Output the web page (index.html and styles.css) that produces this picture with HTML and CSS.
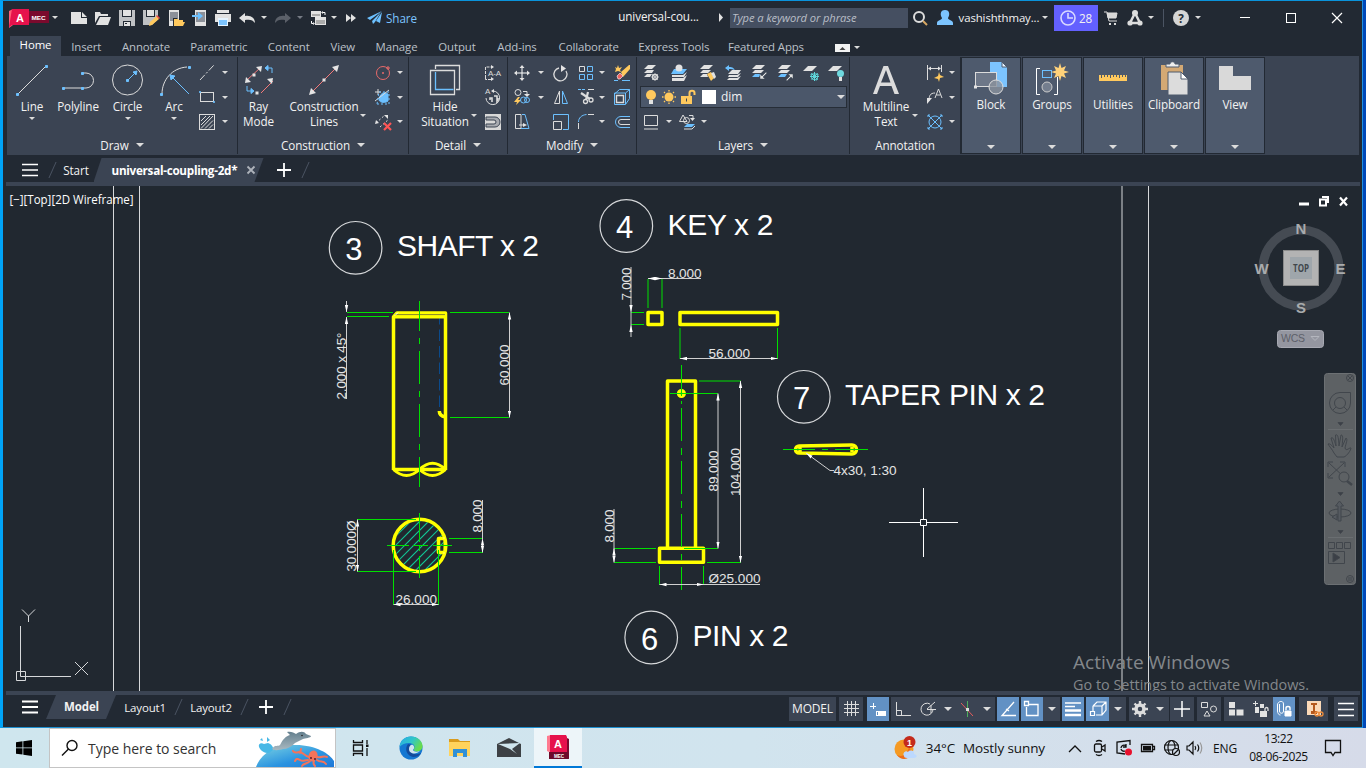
FILE: index.html
```html
<!DOCTYPE html>
<html lang="en">
<head>
<meta charset="utf-8">
<title>universal-coupling-2d</title>
<link rel="stylesheet" href="styles.css">
</head>
<body>
<div class="window">
  <header class="titlebar">
    <span class="logo"><svg width="42" height="20" viewBox="0 0 42 20"><path d="M0 2l4-2v16l-4 3z" fill="#ff5d78"/><path d="M3 0h17v16H3l-3 2z" fill="#e6124c"/><path d="M20 2h20v12H20z" fill="#7b0a2d"/><text x="7" y="13" class="lg">A</text><text x="22.500" y="11" class="mec" textLength="14" lengthAdjust="spacingAndGlyphs">MEC</text></svg></span>
    <b class="caret"></b><i></i>
    <svg width="18" height="16" viewBox="0 0 18 16" class="f"><path d="M1 2h10v6h6v6H1zM12 2l5 5h-5z"/></svg>
    <svg width="18" height="16" viewBox="0 0 18 16" class="f"><path d="M1 2h5l1 2h7v2H5L1 13zM6 7h11l-3 8H2z"/></svg>
    <svg width="18" height="18" viewBox="0 0 18 18" class="f"><path d="M1 1h16v16H1z" fill="#bfc1c4"/><path d="M4 1h10v7H4zM5 12h8v5H5z" fill="#222933"/><path d="M5 1h8v6H5zM6 13h6v4H6z"/><path d="M7 14.500h2" stroke="#222933"/></svg>
    <svg width="18" height="18" viewBox="0 0 18 18" class="f"><path d="M1 1h15v9l-6 6H1z" fill="#bfc1c4"/><path d="M4 1h9v7H4z" fill="#222933"/><path d="M5 1h7v6H5z"/><path d="M8 13l7-6 2 3-7 6-3 1z" fill="#ffc95e"/><path d="M14 7l1-1 3 3-1 1z" fill="#e94b4b"/></svg>
    <svg width="18" height="18" viewBox="0 0 18 18" class="f"><path d="M2 1h10v16H2z"/><path d="M3 3h8v9H3z" fill="#8c9098"/><path d="M6 9h4l1 2h5v6H6z" fill="#222933"/><path d="M7 10h4l1 1h4v2h2l-2 4H7z" fill="#ffc95e"/></svg>
    <svg width="18" height="18" viewBox="0 0 18 18" class="f"><path d="M4 1h11v16H4z"/><path d="M5 3h9v10H5z" fill="#8c9098"/><path d="M1 6h6V3l5 4-5 4V8H1z" fill="#6cc0ff"/></svg>
    <svg width="18" height="18" viewBox="0 0 18 18" class="f"><path d="M3 1h12v3H3zM1 5h16v8H1z"/><path d="M4 9h10v8H4z" fill="#e6f4ff"/><path d="M5 11h8v5H5z" fill="#7cc4ff"/></svg>
    <svg width="18" height="12" viewBox="0 0 18 12" class="f"><path d="M1 6l6-5v3c6-1 10 2 10 7-2-3-5-4-10-3v3z"/></svg>
    <b class="caret"></b>
    <svg width="18" height="12" viewBox="0 0 18 12" fill="#5b6069"><path d="M17 6l-6-5v3C5 3 1 6 1 11c2-3 5-4 10-3v3z"/></svg>
    <b class="caret dim"></b><i></i>
    <svg width="18" height="16" viewBox="0 0 18 16" class="f"><path d="M1 1h10v6H1zM5 7h11v8H5z"/><path d="M2 4h8v2H2zM6 10h9v4H6z" fill="#aaa"/><path d="M12.500 2.500H15V5M3.500 13.500H1.500V11" fill="none" stroke="#fff"/><path d="M13 1v3l-2-1.500zM3 12v3l2-1.500z"/></svg>
    <b class="caret"></b><i></i>
    <svg width="12" height="10" viewBox="0 0 12 10" class="f"><path d="M1 1l5 4-5 4zM6 1l5 4-5 4z"/></svg>
    <svg width="17" height="15" viewBox="0 0 17 15" fill="#6cc0ff"><path d="M16 1L1 8l3 2zM15 2l-9 9 1 3 2-2zM16 2l-6 9 4 2z"/></svg>
    <span class="share">Share</span><i></i>
    <span class="doc">universal-cou...</span><i></i>
    <svg width="6" height="9" viewBox="0 0 6 9" class="f"><path d="M1 0l4 4.500L1 9z"/></svg><i></i>
    <span class="search">Type a keyword or phrase</span><i></i>
    <svg width="18" height="18" viewBox="0 0 18 18" class="s"><circle cx="7" cy="8" r="5" stroke-width="2"/><path d="M11 12l4 4" stroke="#d8a862" stroke-width="2"/></svg>
    <svg width="18" height="18" viewBox="0 0 18 18" fill="#7cc4ff"><path d="M9 1c5 0 5 5 3 8 0 2 5 2 5 5v2H1v-2c0-3 5-3 5-5-2-3-2-8 3-8z"/></svg>
    <span class="user">vashishthmay...</span>
    <b class="caret"></b><i></i>
    <span class="badge"><svg width="16" height="16" viewBox="0 0 16 16" fill="none" stroke="#d9d9ff" stroke-width="1.600"><circle cx="8" cy="8" r="7"/><path d="M8 3v5h5"/></svg><span>28</span></span><i></i>
    <svg width="16" height="16" viewBox="0 0 16 16" class="s"><path d="M1 2h3l2 9h8" /><path d="M4 3h10l-1 5H5z" fill="#d8d8d8"/><path d="M6 14h2M11 14h2" stroke-width="2"/></svg>
    <svg width="18" height="18" viewBox="0 0 18 18" class="s"><path d="M9 4L4 14h10z" stroke-width="2.500"/><g fill="#ddd" stroke="none"><circle cx="9" cy="4" r="3"/><circle cx="4" cy="14" r="2.600"/><circle cx="14" cy="14" r="2.600"/></g></svg>
    <b class="caret"></b><i></i><em class="vline"></em><i></i>
    <span class="help">?</span><i></i>
    <b class="caret"></b><i></i>
    <svg width="12" height="12" viewBox="0 0 12 12" class="s w"><path d="M1 5.500h10"/></svg><i></i>
    <svg width="12" height="12" viewBox="0 0 12 12" class="s w"><rect x="1.500" y="1.500" width="9" height="9"/></svg><i></i>
    <svg width="12" height="12" viewBox="0 0 12 12" class="s w"><path d="M1 1l10 10M11 1L1 11" stroke-width="1.200"/></svg>
  </header>

  <nav class="menu">
    <i></i><span class="on">Home</span><span>Insert</span><span>Annotate</span><span>Parametric</span><span>Content</span><span>View</span><span>Manage</span><span>Output</span><span>Add-ins</span><span>Collaborate</span><span>Express Tools</span><span>Featured Apps</span><i></i><em class="mini"><svg width="15" height="8" viewBox="0 0 15 8"><path d="M4.500 6L7.500 3l3 3z" fill="#444"/></svg></em><b class="caret"></b>
  </nav>

  <section class="ribbon">
    <div class="panel draw">
      <div class="body">
        <div class="big"><svg width="36" height="36" viewBox="0 0 36 36" class="s"><path d="M4 32L32 4"/><path d="M2.500 31.500h2v2h-2zM31.500 3.500h2v2h-2z" class="b"/></svg><span>Line</span><b class="caret"></b></div>
        <div class="big"><svg width="36" height="36" viewBox="0 0 36 36" class="s"><path d="M3 26h20M22 11h4a7 7 0 010 15h-3" /><path d="M2.500 25.500h2v2h-2zM21.500 25.500h2v2h-2zM21.500 10.500h2v2h-2z" class="b"/></svg><span>Polyline</span></div>
        <div class="big"><svg width="36" height="36" viewBox="0 0 36 36" class="s"><circle cx="17.500" cy="18" r="15"/><path d="M18 18l8-8" class="b"/><path d="M16.500 17.500h2v2h-2zM27 9l-1 4-3-3z" class="b"/></svg><span>Circle</span><b class="caret"></b></div>
        <div class="big"><svg width="36" height="36" viewBox="0 0 36 36" class="s"><path d="M5 32C5 18 15 6 30 5"/><path d="M32 32L15 15" class="b"/><path d="M3.500 31.500h2v2h-2zM31.500 4.500h2v2h-2zM13 13l5 1-4 4z" class="b"/></svg><span>Arc</span><b class="caret"></b></div>
        <div class="col">
          <div><svg width="18" height="18" viewBox="0 0 18 18" class="s"><path d="M2 16L16 1" stroke-dasharray="7 2 2 2"/></svg><b class="caret"></b></div>
          <div><svg width="18" height="18" viewBox="0 0 18 18" class="s"><rect x="2.500" y="4.500" width="13" height="9"/><path d="M1.500 3.500h1v1h-1zM15.500 13.500h1v1h-1z" class="b"/></svg><b class="caret"></b></div>
          <div><svg width="18" height="18" viewBox="0 0 18 18" class="s"><rect x="1.500" y="1.500" width="15" height="15"/><path d="M3 8l5-5M3 12l9-9M3 15.500L15 3M7 15.500l8-8M11 15.500l4-4"/></svg><b class="caret"></b></div>
        </div>
      </div>
      <div class="name">Draw<b class="caret lg"></b></div>
    </div>
    <div class="panel cons">
      <div class="body">
        <div class="big"><svg width="36" height="36" viewBox="0 0 36 36" class="s"><path d="M6 18L19 6M20 31l12-12" stroke="#f27979"/><path d="M4 21l1-6 5 5zM21 4l-6 1 5 5zM32 16l-6 1 5 5z" class="g"/><path d="M11.500 11.500h3v3h-3zM14.500 29.500h3v3h-3z" class="g"/><path d="M31 11V6h-6M6 24v5h6" class="b o"/><path d="M24 6l3-2.500v5zM13 29l-3-2.500v5z" class="b"/></svg><span>Ray<br>Mode</span></div>
        <div class="big"><svg width="36" height="36" viewBox="0 0 36 36" class="s"><path d="M6 30L30 6" stroke="#f27979"/><path d="M3 33l2-7 5 5zM33 3l-7 2 5 5zM16.500 16.500h3v3h-3z" class="g"/></svg><span>Construction<br>Lines</span></div>
        <b class="caret side"></b>
        <div class="col">
          <div><svg width="18" height="18" viewBox="0 0 18 18" class="s"><circle cx="9" cy="9" r="6.500" stroke="#e96a6a"/><path d="M8.500 8.500h1v1h-1zM13 3h2v2h-2z" stroke="#e96a6a"/></svg><b class="caret"></b></div>
          <div><svg width="18" height="18" viewBox="0 0 18 18" class="s"><path d="M6 8c3-5 6-3 8-2v7c-2 2-8 2-9-1z" class="b"/><path d="M1 4h6M4 1v6M1 13L15 2"/><path d="M3 16h12V4H5z" class="b o" stroke-dasharray="2 2"/></svg><b class="caret"></b></div>
          <div><svg width="18" height="18" viewBox="0 0 18 18" class="s"><path d="M2 10l9-8M6 14l9-8" stroke-dasharray="2 2"/><path d="M1 11l1-4 3 3zM10 2h4v4z" class="g"/><path d="M10 10l7 7M17 10l-7 7" stroke="#ff5555" stroke-width="2.200"/></svg><b class="caret"></b></div>
        </div>
      </div>
      <div class="name">Construction<b class="caret lg"></b></div>
    </div>
    <div class="panel detail">
      <div class="body">
        <div class="big"><svg width="36" height="36" viewBox="0 0 36 36" class="s"><path d="M8.500 7V3.500h24v24H29M27.500 8.500h-24v24h24z" stroke-width="1.300"/><path d="M8.500 10v17.500h18" class="b o" stroke-width="1.300"/></svg><span>Hide<br>Situation</span></div>
        <b class="caret side"></b>
        <div class="col">
          <div><svg width="18" height="18" viewBox="0 0 18 18" class="s"><path d="M1.500 14V3H7M1.500 14v1.500H7" stroke-dasharray="3 1"/><path d="M7 1l3 2-3 2zM7 13l3 2-3 2z" class="g"/><text x="4" y="12" class="t8">A-A</text></svg></div>
          <div><svg width="18" height="18" viewBox="0 0 18 18" class="s"><path d="M9 3a6.800 6.800 0 11-7 7"/><path d="M6 12v-2h2v4M10 8h3v7M14 10v3" stroke-width="1.600"/><text x="1" y="6" class="t8">A</text><path d="M10 1v4L7 3z" class="g"/></svg></div>
          <div><svg width="18" height="18" viewBox="0 0 18 18"><path d="M1 1h16v16H1z" fill="#d8d8d8"/><path d="M2 4h9a5 5 0 010 10H2v-3h8a2 2 0 000-4H2z" fill="#a7aab0" stroke="#3b4453"/></svg></div>
        </div>
      </div>
      <div class="name">Detail<b class="caret lg"></b></div>
    </div>
    <div class="panel modify">
      <div class="body rows">
        <div class="row"><svg width="18" height="18" viewBox="0 0 18 18" class="s w"><path d="M9 3v12M3 9h12"/><path d="M9 1l2.500 3h-5zM9 17l2.500-3h-5zM1 9l3-2.500v5zM17 9l-3-2.500v5z" class="g"/></svg><b class="caret"></b><svg width="18" height="18" viewBox="0 0 18 18" class="s"><path d="M7 4a6.500 6.500 0 107 3" stroke-width="1.300"/><path d="M9 1l5 3.500L9 8z" class="g sm"/></svg><svg width="18" height="18" viewBox="0 0 18 18" class="s b o"><path d="M2.500 2.500h5v5h-5z" stroke="#ddd"/><path d="M10.500 2.500h5v5h-5zM10.500 10.500h5v5h-5zM2.500 10.500h5v5h-5z"/></svg><b class="caret"></b><svg width="18" height="18" viewBox="0 0 18 18" class="s"><path d="M8 8l8-7h1v4l-7 8z" fill="#ffc95e" stroke="none"/><path d="M7 9l3 3-3 3H5l-1-3z" fill="#f0635f" stroke="#fff" stroke-width=".6"/><path d="M5 1l1 3 3-1-2 3 1 2-3-1-3 1 1-3-1-2 2 1z" fill="#ffc95e" stroke="none"/><path d="M1 16.500h4M9 16.500h8" class="b"/></svg></div>
        <div class="row"><svg width="18" height="18" viewBox="0 0 18 18" class="s"><circle cx="5" cy="4.500" r="3"/><path d="M10 3.500h4v3"/><path d="M11 6h6l-3 3z" class="g"/><path d="M5 9L1 14h3l-1 3 5-5H5l2-3z" fill="#ffc95e" stroke="none"/><g class="b o"><circle cx="10.500" cy="12" r="3"/><circle cx="14" cy="12" r="2.500"/></g></svg><b class="caret"></b><svg width="18" height="18" viewBox="0 0 18 18" class="s"><path d="M7.500 3v12.500h-5z"/><path d="M10.500 3v12.500h5z" class="b o"/></svg><svg width="18" height="18" viewBox="0 0 18 18" class="s"><path d="M4 5l9 6M11 4l-2 8" stroke-width="2.200"/><circle cx="8.500" cy="13.500" r="2" stroke-width="1.300"/><circle cx="14" cy="12" r="2" stroke-width="1.300"/><path d="M1 1.500h8" class="b" stroke-dasharray="3 1"/><path d="M11 1.500h6"/></svg><b class="caret"></b><svg width="18" height="18" viewBox="0 0 18 18" class="s"><path d="M3.500 7.500h7v7h-7z" stroke-width="1.400"/><path d="M1.500 6l5-4.500h10v9l-4 6h-11zV5h11V16M12.500 5l4-3.500" class="b o"/></svg></div>
        <div class="row"><svg width="18" height="18" viewBox="0 0 18 18" class="s"><path d="M8 1.500H2.500v14H8z" /><path d="M9 1.500h3l4 14H8" class="b o"/><path d="M6 12h5"/><path d="M10 10l4 2-4 2z" class="g"/></svg><i></i><svg width="18" height="18" viewBox="0 0 18 18" class="s"><path d="M1.500 8.500h8v8h-8z"/><path d="M1.500 7V1.500h15v15H11" class="b o"/></svg><svg width="18" height="18" viewBox="0 0 18 18" class="s"><path d="M1.500 16v-6M11 1.500h6"/><path d="M1.500 9c0-4 3-7 8-7.500" class="b o"/></svg><b class="caret"></b><svg width="18" height="18" viewBox="0 0 18 18" class="s"><path d="M17 3.500H8a5 5 0 000 11h9" class="b o"/><path d="M17 6.500H8a2.500 2.500 0 000 5h9"/></svg></div>
      </div>
      <div class="name">Modify<b class="caret lg"></b></div>
    </div>
    <div class="panel layers">
      <div class="body rows">
        <div class="row top">
          <svg width="18" height="18" viewBox="0 0 18 18" class="f"><path d="M6 1h8l-4 4H2zM5 6h7l-2 3H2zM5 10h5l-2 3H2z"/><circle cx="13" cy="13" r="2.500" fill="none" stroke="#ddd" stroke-width="1.400"/><path d="M13 9v8M9 13h8M10 10l6 6M16 10l-6 6" stroke="#ddd" stroke-width=".6"/></svg>
          <svg width="18" height="18" viewBox="0 0 18 18" class="f"><path d="M4 5h13l-4 5H1z" fill="#6cc0ff"/><circle cx="9" cy="4" r="3.500"/><path d="M2 11h11l4-3-3 5H2zM2 14h11l4-3-3 6H2z"/></svg>
          <svg width="18" height="18" viewBox="0 0 18 18" class="f"><path d="M6 1h9l-4 4H2zM5 6h8l-3 3H2zM5 10h4l1 3H2z"/><path d="M9 10l4-2 3 6-3 3z" fill="#ffc95e"/><path d="M13 9l3-1 2 5-2 2z"/></svg>
          <svg width="18" height="18" viewBox="0 0 18 18" class="f"><path d="M1 4l4-3v2c4 0 5 1 6 4-2-2-3-2-6-2v2z" fill="#6cc0ff"/><path d="M8 6h9l-3 4H4zM5 11h8l4-2-3 4H4zM5 14h8l4-2-3 4H3z"/></svg>
          <svg width="18" height="18" viewBox="0 0 18 18" class="f"><path d="M6 1h9l-4 4H2zM5 6h9l-3 3H2z"/><path d="M5 10h6l-2 3H2z" fill="#6cc0ff"/><path d="M17 9l-4 4 2 2h-5v-5l2 2 4-4z" stroke="#3b4453" stroke-width=".5"/></svg>
          <svg width="18" height="18" viewBox="0 0 18 18" class="f"><path d="M6 1h9l-4 4H2zM5 6h9l-3 3H2z"/><path d="M5 10h6l-2 3H2z" fill="#6cc0ff"/><path d="M10 16l4-4-2-2h5v5l-2-2-4 4z" stroke="#3b4453" stroke-width=".5"/></svg>
          <svg width="18" height="18" viewBox="0 0 18 18" class="f"><path d="M6 2h9l-5 5H1z"/><path d="M12.500 8v9M8 12.500h9M9.500 9.500l6 6M15.500 9.500l-6 6M9 10l1 5 5 1 1-6z" fill="none" stroke="#5fd7dc"/></svg>
          <svg width="18" height="18" viewBox="0 0 18 18" class="f"><path d="M6 2h9l-5 5H1z"/><circle cx="13.500" cy="9.500" r="3.500" fill="#6fd9df"/><path d="M12 13h3v4h-3z"/></svg>
        </div>
        <div class="select">
          <svg width="14" height="16" viewBox="0 0 14 16" class="f"><circle cx="7" cy="6" r="5" fill="#ffc95e"/><path d="M5 11h4v4H5z"/></svg>
          <svg width="16" height="16" viewBox="0 0 16 16"><circle cx="8" cy="8" r="4.500" fill="#ffc95e"/><path d="M8 1v1.500M8 13.500V15M1 8h1.500M13.500 8H15M3 3l1 1M12 12l1 1M13 3l-1 1M3 13l1-1" stroke="#ffc95e" stroke-width="1.300"/></svg>
          <svg width="16" height="16" viewBox="0 0 16 16"><path d="M1 7h11v8H1z" fill="#ffc95e"/><path d="M9.500 7V4c0-3 5-3 5 0v2" fill="none" stroke="#ffc95e" stroke-width="2"/><path d="M6.500 9.500v3" stroke="#3b4453"/></svg>
          <em class="swatch"></em><span>dim</span><b class="caret lg"></b>
        </div>
        <div class="row low"><svg width="18" height="18" viewBox="0 0 18 18" class="s"><path d="M2.500 2.500h13v10h-13zM2 16h14"/></svg><b class="caret"></b><svg width="18" height="18" viewBox="0 0 18 18" class="s"><path d="M5 2L1.500 8.500H9z"/><circle cx="8.500" cy="7.500" r="3"/><path d="M11 2.500h4v3"/><path d="M12 5h5l-2.500 3z" class="g sm"/><path d="M9 11h8l-3 3H6z" class="b sm"/><path d="M6 16h8l3-3"/></svg><b class="caret"></b></div>
      </div>
      <div class="name">Layers<b class="caret lg"></b></div>
    </div>
    <div class="panel anno">
      <div class="body">
        <div class="big"><svg width="36" height="36" viewBox="0 0 36 36"><path d="M5 32L15.500 4h4.500l11 28h-4.500l-3-8H12l-3 8zM13 20.500h9.500L18 8z" fill="#dcdcdc" fill-rule="evenodd"/></svg><span>Multiline<br>Text</span></div>
        <b class="caret side"></b>
        <div class="col">
          <div><svg width="18" height="18" viewBox="0 0 18 18" class="s"><path d="M1.500 1v15M15.500 1v7M3 4.500h11"/><path d="M2 4.500l3-2v4zM15 4.500l-3-2v4z" class="g sm"/><path d="M13 8l1 3 4 2-4 1-1 4-1-3-4-1 4-2z" fill="#ffc95e" stroke="none"/></svg><b class="caret"></b></div>
          <div><svg width="18" height="18" viewBox="0 0 18 18" class="s"><path d="M3 13c0-5 1-8 6-8"/><path d="M1 10h5l-5 6z" class="g sm"/><path d="M9 10l3.500-9L16 10M10.500 7h4"/></svg><b class="caret"></b></div>
          <div><svg width="18" height="18" viewBox="0 0 18 18" class="s b o"><circle cx="9" cy="9" r="6"/><path d="M2 2l14 14M16 2L2 16M2 4V2h2M14 2h2v2M16 14v2h-2M4 16H2v-2"/></svg><b class="caret"></b></div>
        </div>
      </div>
      <div class="name">Annotation</div>
    </div>
    <div class="tiles">
      <div class="tile"><svg width="36" height="36" viewBox="0 0 36 36" class="s"><path d="M17 1h12l5 5v20H17z" fill="#7cc4ff" stroke="none"/><path d="M29 1v5h5z" fill="#e8f4ff" stroke="#4e5a6d"/><rect x="2.500" y="11.500" width="21" height="14" fill="#6d7788"/><path d="M1 24.500h3v3H1z" class="g sm"/><circle cx="23" cy="26" r="7" fill="#8b929e" fill-opacity=".8"/></svg><span>Block</span><b class="caret lg"></b></div>
      <div class="tile"><svg width="36" height="36" viewBox="0 0 36 36" class="s w"><path d="M6 7.500H2.500v26H6M20 33.500h3.500V16"/><rect x="8.500" y="9.500" width="9" height="7" class="b o"/><circle cx="13" cy="26" r="5" fill="#747e8e" stroke="#ccc"/><path d="M26 2l1.500 5 4.500-2-2 4.500 5 1.500-5 1.500 2 4.500-4.500-2L26 20l-1.500-5-4.500 2 2-4.500-5-1.500 5-1.500L20 5l4.500 2z" fill="#ffd27a" stroke="none"/></svg><span>Groups</span><b class="caret lg"></b></div>
      <div class="tile"><svg width="36" height="36" viewBox="0 0 36 36"><path d="M4 14h28v6H4z" fill="#ffc95e"/><path d="M6.500 14v3M9.500 14v2M12.500 14v2M15.500 14v3M18.500 14v2M21.500 14v2M24.500 14v3M27.500 14v2M30.500 14v2" stroke="#4e5a6d"/></svg><span>Utilities</span><b class="caret lg"></b></div>
      <div class="tile"><svg width="36" height="36" viewBox="0 0 36 36"><path d="M5 4h22v25H5z" fill="#d4a974"/><path d="M10 6V3h4c0-3 5-3 5 0h4v3z" fill="#eee" stroke="#4e5a6d"/><path d="M12 11h13l7 7v16H12z" fill="#dcdcdc" stroke="#4e5a6d"/><path d="M25 11v7h7z" fill="#fff" stroke="#4e5a6d"/></svg><span>Clipboard</span><b class="caret lg"></b></div>
      <div class="tile"><svg width="36" height="36" viewBox="0 0 36 36"><path d="M2 5h14v10h18v14H2z" fill="#d9d9d9"/></svg><span>View</span><b class="caret lg"></b></div>
    </div>
  </section>

  <div class="doctabs">
    <i></i><svg width="16" height="14" viewBox="0 0 16 14" class="s w"><path d="M0 1.500h16M0 7h16M0 12.500h16" stroke-width="1.600"/></svg><u></u><span>Start</span><span class="active">universal-coupling-2d*<svg width="10" height="10" viewBox="0 0 10 10" stroke="#aeb3bb" stroke-width="1.800"><path d="M1.500 1.500l7 7M8.500 1.500l-7 7"/></svg></span><i></i><svg width="14" height="14" viewBox="0 0 14 14" class="s w"><path d="M7 0v14M0 7h14" stroke-width="1.800"/></svg><u></u>
  </div>
  <div class="strip"></div>

  <main class="canvas">
  <svg width="1359" height="505" viewBox="3 186 1359 505">
    <defs>
      <marker id="ar" markerWidth="7" markerHeight="4" refX="7" refY="2" orient="auto-start-reverse" markerUnits="userSpaceOnUse"><path d="M0 .3L7 2 0 3.700z" fill="#fff"/></marker>
      <clipPath id="disc"><circle cx="419.500" cy="545.500" r="24.500"/></clipPath>
    </defs>
    <g class="thin"><path d="M113.500 186v505M139.500 186v505M1122 186v505M1148.500 186v505"/></g>
    <text x="9.500" y="204" class="ui" textLength="124" lengthAdjust="spacingAndGlyphs">[−][Top][2D Wireframe]</text>
    <g class="thin"><path d="M20.500 626v50.500H71M16.500 671.500h9v9h-9zM22 609.500l6.500 6.500 6.500-6.500M28.500 616v6M75 662l13 13M88 662l-13 13"/></g>

    <g class="ring"><circle cx="355.600" cy="247.800" r="26.300"/><circle cx="626.300" cy="226" r="26.300"/><circle cx="803.800" cy="396.800" r="26.300"/><circle cx="651.200" cy="637.500" r="26.300"/></g>
    <g class="ttl">
      <text x="345.200" y="260" class="num">3</text><text x="397" y="256" textLength="142">SHAFT x 2</text>
      <text x="616" y="238" class="num">4</text><text x="667.500" y="235" textLength="106">KEY x 2</text>
      <text x="793" y="409" class="num">7</text><text x="845" y="405" textLength="200">TAPER PIN x 2</text>
      <text x="641" y="650" class="num">6</text><text x="692.500" y="646" textLength="96">PIN x 2</text>
    </g>

    <g class="hatch" clip-path="url(#disc)"><path d="M380 552l50-50M380 561l60-60M380 570l70-70M380 579l70-70M385 583l70-70M394 583l70-70M403 583l60-60M412 583l60-60M421 583l60-60"/></g>
    <path d="M439.500 313v99" stroke="#0b4a8a" stroke-dasharray="11.500 5"/>
    <g class="yel">
      <path d="M393.500 470V317l3.500-4h48.500v157M394 316.800h51.500M393.500 469.500h52M439.300 411q0 5 6 6"/>
      <path d="M393.500 469.500q13 12 26 0q13-12.500 26 0M419.500 469.500q13 12 26 0" stroke-width="3"/>
      <circle cx="419.500" cy="545.500" r="26.300"/><path d="M444.500 538.500h-6v14h6"/><path d="M444.500 539v13" stroke-width="2"/>
      <rect x="648" y="312.400" width="14" height="12"/><rect x="680" y="312.400" width="97.500" height="12"/>
      <path d="M667.500 548V381h28v167"/><rect x="659.500" y="548.300" width="44" height="14"/><circle cx="681.400" cy="393.500" r="2.800"/>
      <path d="M799 446l53-1a4.500 4.500 0 010 9l-53-1a3.500 3.500 0 010-7zM800 447v5M852 447v5"/>
    </g>
    <path d="M395 314.600h50" stroke="#8a8a2a"/>
    <path d="M398 312.500l-3 3M443.500 538h1M443.500 553h1" stroke="#fff"/>
    <g class="grn">
      <path d="M419.500 301v30M419.500 338v6M419.500 351v33M419.500 391v6M419.500 404v33M419.500 444v6M419.500 457v30M419.500 513v29M419.500 545v6M419.500 556v22M387 545.500h22M413 545.500h15M433 545.500h19"/>
      <path d="M347 312.500h46M347 316.500h42M450 312.500h59M450 417.500h59M357 519.500h59M357 571.500h59M393.500 550v55M438.500 550v55M449 538.500h34M449 552.500h34"/>
      <path d="M631 312.500h13M631 324.500h13M648 279v29M662 279v29M680 328v31M777.500 328v31"/>
      <path d="M681.500 365v31M681.500 401v3M681.500 408v33M681.500 448v7M681.500 461v33M681.500 501v7M681.500 514v33M681.500 554v6M681.500 567v23M670 393.500h48M699 381h42M614 548.500h42M684 548.500h34M614 562.500h42M707 562.500h34M659.500 566v19M703.500 566v19"/>
      <path d="M783 449.500h32M822 449.500h6M835 449.500h33"/>
    </g>
    <g class="dimline">
      <path d="M346.500 301v11" marker-end="url(#ar)"/><path d="M346.500 399v-82" marker-end="url(#ar)"/>
      <path d="M509.500 312.500v105" class="two"/><path d="M357.500 519.500v52" class="two"/><path d="M393.500 604.500h45" class="two"/><path d="M482.500 538.500v14" class="two"/><path d="M482.500 500v40"/>
      <path d="M631 267v45" marker-end="url(#ar)"/><path d="M631 337v-12" marker-end="url(#ar)"/><path d="M648 278.500h14" class="two"/><path d="M662 278.500h39M631 312v13"/><path d="M680 358.500h97.500" class="two"/>
      <path d="M718 393.500v155" class="two"/><path d="M740.500 381v181.500" class="two"/><path d="M614 548.500v14" class="two"/><path d="M614 509v42"/><path d="M659.500 584.500h44" class="two"/><path d="M703 584.500h57"/>
      <path d="M834 470.500h-4L806 453" marker-end="url(#ar)"/>
    </g>
    <g class="dims">
      <text transform="translate(346 399.500) rotate(-90)" textLength="67">2.000 x 45°</text>
      <text transform="translate(508.500 385.500) rotate(-90)" textLength="41">60.000</text>
      <text transform="translate(356.300 571.500) rotate(-90)" textLength="51">30.000Ø</text>
      <text transform="translate(482 532.500) rotate(-90)" textLength="33">8.000</text>
      <text x="395.500" y="604" textLength="41.500">26.000</text>
      <text transform="translate(630.500 300.500) rotate(-90)" textLength="33">7.000</text>
      <text x="668" y="278" textLength="33.500">8.000</text>
      <text x="708.500" y="358" textLength="41.500">56.000</text>
      <text transform="translate(717.500 491.500) rotate(-90)" textLength="41">89.000</text>
      <text transform="translate(740 496) rotate(-90)" textLength="48">104.000</text>
      <text transform="translate(613.500 542.500) rotate(-90)" textLength="33">8.000</text>
      <text x="708.500" y="583" textLength="52">Ø25.000</text>
      <text x="833.500" y="475" textLength="63">4x30, 1:30</text>
    </g>
    <path d="M889 522.500h31M927 522.500h31M923.500 488v31M923.500 526v31M920.500 519.500h6v6h-6z" class="cross"/>

    <path d="M1299 204h10" stroke="#fff" stroke-width="3"/><path d="M1320 199.500h6v6h-6zM1322 197h6v6" fill="none" stroke="#fff" stroke-width="2"/><path d="M1340 197.500l7 8M1347 197.500l-7 8" stroke="#fff" stroke-width="2.200"/>
    <circle cx="1301" cy="268" r="38" fill="none" stroke="#454b53" stroke-width="9"/>
    <g class="nsew"><text x="1301" y="234">N</text><text x="1301" y="313">S</text><text x="1261.500" y="273.500">W</text><text x="1340.500" y="273.500">E</text></g>
    <rect x="1283.500" y="250.500" width="35" height="35" fill="#b3b3b3" stroke="#8b8b8b"/><rect x="1290" y="257" width="22" height="22" fill="#9fa6ab"/><text x="1293" y="272" class="top" textLength="16" lengthAdjust="spacingAndGlyphs">TOP</text>
    <rect x="1277.500" y="330.500" width="46" height="17" rx="3" fill="#9496a0" stroke="#a7a9b2"/><text x="1281" y="342" class="wcs" textLength="24">WCS</text><path d="M1311 336.500h8l-4 4z" fill="none" stroke="#b4b6be"/>
    <rect x="1324.500" y="373.500" width="31" height="211" rx="3" fill="#5d6164" stroke="#6c7073"/>
    <g class="navi">
      <circle cx="1350" cy="378" r="3.500"/><path d="M1348 376l4 4M1352 376l-4 4"/>
      <path d="M1340 392.500h10.500v10.500a10.500 10.500 0 11-10.500-10.500z"/><circle cx="1340" cy="403" r="5.500"/><path d="M1333 410l3-3M1347 410l-3-3"/>
      <path d="M1338 422.500h5l-2.500 3zM1338 492.500h5l-2.500 3zM1338 530.500h5l-2.500 3z" fill="#3c4047"/>
      <path d="M1328 429.500h25M1328 537.500h25" stroke="#6a6e71"/>
      <path d="M1334 453c-2-4-5-7-6-9 2-1 4 2 6 4l-3-10c2-1 3 1 5 8l-.5-11c2-1 3 1 3.500 11l2-11c2 0 2 2 1 12l4-9c2 1 0 5-1 10 1 4 5-1 6 0 0 2-4 8-7 9h-7z"/>
      <path d="M1329 463l16 15M1344 463l-15 14M1328 467v-5h5M1340 462h5v5M1328 473v5h5"/><circle cx="1344" cy="477" r="5" fill="#5d6164"/><path d="M1347 481l5 4" stroke-width="2.500"/>
      <ellipse cx="1340" cy="513" rx="11" ry="4"/><path d="M1338 521v-15h-2.500l4-5 4 5h-2.500v15zM1332 517l5-3v6z" fill="#565b61"/>
      <path d="M1328.500 542.500h6v6h-6zM1336.500 542.500h6v6h-6zM1344.500 542.500h6v6h-6zM1328.500 551.500h16v12h-16z"/><path d="M1333 553l7 4.500-7 4.500z" fill="#3c4047"/>
      <circle cx="1350" cy="579" r="3.500"/><path d="M1348 578h4M1348 580h4"/>
    </g>
    <text x="1073" y="669" class="act big1" textLength="157" lengthAdjust="spacingAndGlyphs">Activate Windows</text>
    <text x="1073" y="689.500" class="act" textLength="236" lengthAdjust="spacingAndGlyphs">Go to Settings to activate Windows.</text>
  </svg>
  </main>
  <div class="strip"></div>

  <footer class="status">
    <div class="layouts"><svg width="16" height="14" viewBox="0 0 16 14" class="s w"><path d="M0 1.500h16M0 7h16M0 12.500h16" stroke-width="1.800"/></svg><span class="model">Model</span><span>Layout1</span><u></u><span>Layout2</span><u></u><svg width="14" height="14" viewBox="0 0 14 14" class="s w"><path d="M7 0v14M0 7h14" stroke-width="1.800"/></svg><u></u></div>
    <div class="tools">
      <span class="btn m">MODEL</span><i></i>
      <span class="btn"><svg width="18" height="18" viewBox="0 0 18 18" class="s"><path d="M5.500 1v15M9.500 1v15M13.500 1v15M2 4.500h15M2 8.500h15M2 12.500h15"/></svg></span><i></i>
      <span class="btn hot"><svg width="18" height="18" viewBox="0 0 18 18" class="s w"><path d="M1 6.500h6M4.500 3v6"/><path d="M7 11h10v5H7z" fill="#fff" stroke="none"/><path d="M8 12h1v3H8z" fill="#6291c4" stroke="none"/></svg></span><i></i>
      <span class="btn"><svg width="18" height="18" viewBox="0 0 18 18" class="s"><path d="M2.500 2v13.500H17M3 10.500h4.500v5"/></svg></span>
      <span class="btn"><svg width="18" height="18" viewBox="0 0 18 18" class="s"><path d="M14 9a6 6 0 11-3-5M8 9.500h9M8 9l8-7M12 5v8" /></svg></span>
      <span class="btn"><b class="caret lg"></b></span>
      <span class="btn"><svg width="18" height="18" viewBox="0 0 18 18"><path d="M3 3l12 13" stroke="#e35d5d"/><path d="M9.500 1v16" stroke="#4fae5b"/><path d="M8 8h3v3H8z" fill="#ddd"/></svg></span>
      <span class="btn"><b class="caret lg"></b></span><i></i>
      <span class="btn hot"><svg width="18" height="18" viewBox="0 0 18 18" class="s w"><path d="M15 2L3 15.500h14M7 9l3 2" stroke-width="1.300"/></svg></span><i></i>
      <span class="btn hot"><svg width="18" height="18" viewBox="0 0 18 18" class="s w"><path d="M5 4.500h10v11H3.500V7M1.500 1.500h4v4h-4z" stroke-width="1.300"/></svg></span>
      <span class="btn"><b class="caret lg"></b></span><i></i>
      <span class="btn hot"><svg width="18" height="18" viewBox="0 0 18 18" class="s w"><path d="M1 3h16M1 6.500h10" stroke-width="1.500"/><path d="M1 10.500h16M1 15h16" stroke-width="2.500"/></svg></span><i></i>
      <span class="btn hot"><svg width="18" height="18" viewBox="0 0 18 18" class="s w"><path d="M4 6l4-4h9v8l-4 5H7M4 6v5M4 6h9v9M13 6l4-4M1.500 11.500h4v4h-4z" stroke-width="1.200"/></svg></span>
      <span class="btn"><b class="caret lg"></b></span><i></i>
      <span class="btn"><svg width="18" height="18" viewBox="0 0 18 18" class="s"><circle cx="9" cy="9" r="4" stroke-width="3.500"/><path d="M9 1v4M9 13v4M1 9h4M13 9h4M3.500 3.500l2.500 2.500M12 12l2.500 2.500M14.500 3.500L12 6M6 12l-2.500 2.500" stroke-width="2.400"/></svg></span>
      <span class="btn"><b class="caret lg"></b></span><i></i>
      <span class="btn"><svg width="18" height="18" viewBox="0 0 18 18" class="s w"><path d="M9 1v16M1 9h16" stroke-width="1.500"/></svg></span><i></i>
      <span class="btn"><svg width="18" height="18" viewBox="0 0 18 18" class="s"><path d="M1.500 2.500h6v5h-6zM7 11l3 5H4z"/><circle cx="13.500" cy="9" r="3"/></svg></span><i></i>
      <span class="btn"><svg width="18" height="18" viewBox="0 0 18 18" class="f"><path d="M2 2h6v6H2zM2 9.500h6v6H2zM9.500 9.500h7v6h-7z"/></svg></span>
      <span class="btn"><svg width="18" height="18" viewBox="0 0 18 18" class="f"><path d="M1 3h2V1h1v2h2v1H4v2H3V4H1zM3 7h4v6H3zM8 4h4v4H8zM8 11h7v6H8z"/><path d="M13 11V9c0-2 3-2 3 0v2" fill="none" stroke="#ddd" stroke-width="1.300"/></svg></span>
      <span class="btn hot"><svg width="18" height="18" viewBox="0 0 18 18" class="s w"><path d="M4.500 4v7c0 3 4 3 4 0V4c0-4-6-3-6 1v6c0 2 1 4 3 4"/><path d="M10 11h6v5h-6z" fill="#fff"/><path d="M11 10V8c0-2 4-2 4 0v2" stroke-width="1.400"/></svg></span><i></i>
      <span class="btn"><svg width="20" height="18" viewBox="0 0 20 18"><path d="M3 1h14v14H3z" fill="#fbd9b8"/><path d="M7 3h6v2h-2v6h2v3H7v-3h2V5H7z" fill="#b5581c"/><path d="M11 14a2 2 0 104 0 2 2 0 114 0 2 2 0 11-4 0 2 2 0 10-4 0" fill="none" stroke="#ee8c3b" stroke-width="1.300"/></svg></span><i></i>
      <span class="btn"><svg width="18" height="18" viewBox="0 0 18 18" class="s w"><path d="M1 3.500h16M1 9.500h16M1 15.500h16" stroke-width="1.400"/></svg></span>
    </div>
  </footer>
</div>

<div class="taskbar">
  <i></i><svg width="16" height="16" viewBox="0 0 16 16"><path d="M0 2.300L6.500 1.300v6.200H0zM7.300 1.200L16 0v7.500H7.300zM0 8.300h6.500v6.300L0 13.700zM7.300 8.300H16V16l-8.700-1.300z"/></svg><i></i>
  <div class="find">
    <svg width="18" height="18" viewBox="0 0 18 18" fill="none" stroke="#111" stroke-width="1.400"><circle cx="11" cy="6.500" r="5"/><path d="M7.500 10L1 16.500"/></svg><span>Type here to search</span>
    <svg width="80" height="38" viewBox="256 729 80 38">
      <defs><linearGradient id="sea" x1="0" x2="1" y1="0" y2="1"><stop offset="0" stop-color="#7fd6e3"/><stop offset=".6" stop-color="#2a93e0"/><stop offset="1" stop-color="#1f78d8"/></linearGradient><linearGradient id="dol" x1="0" x2="0" y1="0" y2="1"><stop offset="0" stop-color="#64808f"/><stop offset="1" stop-color="#a9b9c1"/></linearGradient></defs>
      <path d="M257 767c5-14 20-23 40-22 20 0 34 9 38 16v6z" fill="url(#sea)"/>
      <path d="M260 747c-1-3 2-5 5-3l4-1c3 1 6 4 5 7l-4 3c-5 0-8-2-10-6zM261 740l2-2 1 3zM268 737l3 3-3 2z" fill="#48b8e6"/>
      <path d="M273 749c3-5 6-2 8-4 3-6 6-9 10-10l-3-3c4-1 7 1 9 2 4-3 8-3 10 0l5 2c0 2-6 2-8 3l-8 4c-4 4-8 6-12 6-4 1-8 2-11 0z" fill="url(#dol)"/><circle cx="303" cy="735.500" r=".8" fill="#222"/>
      <g fill="none" stroke="#f4735a" stroke-width="2" stroke-linecap="round"><path d="M310 757c-5-1-7-6-10-5s-5 1-6-1M309 760c-4 0-5 2-8 0s-4-1-5 1M311 761c-2 3-7 2-8 5M315 761c-1 2 0 4 1 5M318 760c4 3 6 0 9 4M318 757c5 1 7-2 10 0M301 753l1-4"/></g><ellipse cx="314" cy="756" rx="4.500" ry="5.500" fill="#f4735a" transform="rotate(20 314 756)"/><circle cx="312" cy="758" r=".9" fill="#412"/><circle cx="316" cy="759" r=".9" fill="#412"/>
    </svg>
  </div><i></i>
  <svg width="18" height="16" viewBox="0 0 18 16" fill="none" stroke="#111" stroke-width="1.300"><path d="M1.500 0v2.500h9V0M1.500 5h9v6h-9zM1.500 16v-2.500h9V16M15 0v4M15 8v8"/><path d="M14 4.500h2.500v2.500H14z" fill="#111" stroke="none"/></svg><i></i>
  <svg width="24" height="24" viewBox="0 0 24 24"><defs><linearGradient id="e1" x1="0" x2="1" y1="0" y2=".5"><stop offset="0" stop-color="#29a9e8"/><stop offset=".55" stop-color="#30c6c8"/><stop offset="1" stop-color="#68dc4c"/></linearGradient></defs><circle cx="12" cy="12" r="11.500" fill="#1477d2"/><path d="M.5 11C1 4 6 .5 12 .5c7 0 11.500 5 11.500 9.500 0 4-3 5.500-6 5.500-2 0-3.500-1-2.500-2.500 2-4-2-6-5-6-4 0-7 1.500-9.500 4z" fill="url(#e1)"/><path d="M9 8c-4 5-1 12 5 13 4 0 6-1 8-4-2 1-4 1.500-6 1-5-1-6-6-3-9z" fill="#124b9c"/><path d="M10 13c0-3 2-5 4-4 2 2 1 4 0 5 1 2 4 2 7 1-4 4-11 3-11-2z" fill="#cfe5ef"/></svg><i></i>
  <svg width="24" height="20" viewBox="0 0 24 20"><path d="M1 1h9l2 2h10v4H1z" fill="#d99b1c"/><path d="M1 4h21v14H1z" fill="#ffd35c"/><path d="M5 11h14v8h-4v-4H9v4H5z" fill="#3191d6"/></svg><i></i>
  <svg width="24" height="20" viewBox="0 0 24 20" fill="#3d4145"><path d="M0 6l12-6 12 6v13H0z"/><path d="M1 6l22-1-8 6 5 5-7-5z" fill="#d0e5ed"/></svg><i></i>
  <div class="app"><svg width="24" height="26" viewBox="0 0 24 26"><path d="M1 2l4-1v18l-4-2z" fill="#ff7a90"/><path d="M21 4l2 1v19h-2z" fill="#7b0a2d"/><path d="M4 1h16l1 2v15H4z" fill="#e6124c"/><path d="M3 18h19l1 7H3z" fill="#6d0a2a"/><text x="8" y="14" class="lg">A</text><text x="8" y="24" class="mec s5" textLength="10" lengthAdjust="spacingAndGlyphs">MEC</text></svg></div><i></i>
  <svg width="24" height="24" viewBox="0 0 24 24"><circle cx="10" cy="13" r="9.500" fill="#f59a23"/><path d="M3 19c6 3 10-1 12-8l3 6c-2 7-11 8-15 2z" fill="#ef6c1a"/><path d="M10 20c-2-3 2-6 4-4 2-3 7-1 6 2 4 1 3 4 0 4h-7c-2 0-3-1-3-2z" fill="#bcd9ff"/><circle cx="15.500" cy="6" r="6" fill="#c42b1c"/><text x="13" y="9.500" class="one">1</text></svg>
  <span class="temp">34°C</span><span class="sun">Mostly sunny</span><i></i>
  <svg width="14" height="9" viewBox="0 0 14 9" fill="none" stroke="#111" stroke-width="1.300"><path d="M1 8l6-6 6 6"/></svg><i></i>
  <svg width="14" height="18" viewBox="0 0 14 18" fill="none" stroke="#111" stroke-width="1.300"><rect x="1.500" y="5" width="7" height="8" rx="1.500"/><path d="M9 8l3-2v6l-3-2M3 2.500q3-2 6 0M3 15.500q3 2 6 0"/></svg><i></i>
  <svg width="18" height="18" viewBox="0 0 18 18" fill="none" stroke="#111" stroke-width="1.300"><path d="M15 6V1.500L2 3v11l8 1"/><path d="M6 9a3 3 0 015-2M6 10a3 3 0 004 2M11 5v3H8"/><circle cx="13.500" cy="13" r="3.500" fill="#e8112d" stroke="none"/></svg><i></i>
  <svg width="16" height="12" viewBox="0 0 16 12"><path d="M1.500 2.500h11v7h-11zM13 4.500h1.500v3H13" fill="none" stroke="#111" stroke-width="1.300"/><path d="M3 4h8v4.500H3z" fill="#111"/></svg><i></i>
  <svg width="18" height="18" viewBox="0 0 18 18" fill="none" stroke="#111" stroke-width="1.200"><circle cx="8.500" cy="8.500" r="7"/><ellipse cx="8.500" cy="8.500" rx="3.500" ry="7"/><path d="M1.500 6h14M1.500 11h14"/><circle cx="13" cy="13" r="3.500" fill="#d4dfec"/><path d="M10.500 15.500l5-5"/></svg><i></i>
  <svg width="18" height="16" viewBox="0 0 18 16" fill="none" stroke="#111" stroke-width="1.200"><path d="M1 6h2l4-4v12l-4-4H1zM9 6q1.500 2 0 4M11.500 4.500q2.500 3.500 0 7"/><path d="M14 2.500q3.500 5.500 0 11" stroke="#999"/></svg>
  <span class="eng">ENG</span>
  <span class="clock">13:22<br><em>08-06-2025</em></span>
  <svg width="18" height="18" viewBox="0 0 18 18" fill="none" stroke="#111" stroke-width="1.300"><path d="M1.500 1.500h15v12H11l-2 3-2-3H1.500z"/></svg>
</div>
</body>
</html>
```
FILE: styles.css
```css
* { box-sizing: border-box; }
body { margin: 0; width: 1366px; height: 768px; overflow: hidden; font-family: "Open Sans", "Noto Sans", sans-serif; font-size: 11.700px; color: #f2f2f2; background: #0048b8; letter-spacing: -0.1px; }
i, em { font-style: normal; }
svg { display: block; flex: none; overflow: visible; }
.window { width: 1363px; height: 728px; background: #222933; border-left: 3px solid #00a4f8; border-top: 1px solid #0a93dc; border-right: 1px solid #1d8fe0; border-bottom: 1px solid #1d8fd0; display: flex; flex-direction: column; }
.f { fill: #e2e2e2; }
.s { fill: none; stroke: #dcdcdc; stroke-width: 1; }
.s.w { stroke: #fff; }
.b { stroke: #6cc0ff; fill: #6cc0ff; }
.b.o { fill: none; }
.g { fill: #e4e4e4; stroke: none; }
.sm { stroke: none; }
.lg { font: bold 11px "Liberation Sans", sans-serif; fill: #fff; letter-spacing: 0; }
.mec { font: bold 6px "Liberation Sans", sans-serif; fill: #fff; }
.mec.s5 { font-size: 5px; }
.t8 { font: 8px "Liberation Sans", sans-serif; fill: #ddd; stroke: none; }
.caret { width: 0; height: 0; border: solid transparent; border-width: 3px 3px 0; border-top-color: #dcdcdc; flex: none; }
.caret.lg { border-width: 4px 4px 0; }
.caret.dim { border-top-color: #777c85; }

.titlebar { height: 35px; padding-bottom: 2px; display: grid; align-items: center; justify-items: center; white-space: nowrap;
 grid-template-columns: 48px 8px 8px 24px 24px 24px 24px 25px 23px 24px 24px 10px 27px 8px 3px 24px 6px 2px 24px 23px 31px 200px 83px 17px 8px 5px 178px 1px 24px 24px 84px 8px 5px 44px 1px 24px 24px 7px 8px 2px 5px 24px 1px 8px 31px 24px 22px 24px 22px 24px; }
.logo { padding-left: 6px; justify-self: start; padding-top: 3px; }
.share { color: #7cc4ff; }
.doc { position: relative; top: -2px; }
.user { font-size: 11.400px; }
.search { width: 178px; height: 20px; background: #454f61; color: #b9bec7; font-style: italic; line-height: 19px; padding-left: 2px; font-size: 11.200px; }
.badge { width: 44px; height: 26px; background: #6360ff; display: flex; align-items: center; gap: 3px; padding-left: 6px; }
.vline { width: 1px; height: 18px; background: #4b5463; }
.help { width: 16px; height: 16px; border-radius: 50%; background: #d5d5d5; color: #222933; font-weight: bold; text-align: center; line-height: 16px; }

.menu { height: 20px; padding-bottom: 2px; display: grid; align-items: center; justify-items: center; white-space: nowrap; color: #bcc1c9; font-size: 11.400px;
 grid-template-columns: 7px 51px 50.500px 69px 76.500px 63.500px 44.500px 63px 58px 62px 81.500px 88.500px 96px 21px 15px 13px; }
.menu .on { background: #3b4453; width: 51px; height: 20px; text-align: center; line-height: 18px; color: #fff; align-self: start; }
.mini { width: 15px; height: 8px; background: #f2f2f2; margin-top: 4px; }
.menu .caret { margin-top: 3px; }

.ribbon { height: 99px; margin: 0 3px 0 4px; background: #3b4453; display: flex; }
.panel { border-right: 1px solid #222933; display: flex; flex-direction: column; margin: 1px 0; }
.draw { width: 231px; } .cons { width: 171px; } .detail { width: 99px; } .modify { width: 129px; } .layers { width: 213px; } .anno { width: 111px; }
.body { height: 79px; display: flex; }
.name { height: 17px; display: flex; align-items: center; justify-content: center; gap: 7px; }
.big { display: flex; flex-direction: column; align-items: center; padding-top: 5px; text-align: center; line-height: 15px; white-space: nowrap; }
.big span { margin-top: 1px; }
.big .caret { margin-top: 3px; }
.draw .big:nth-child(1) { width: 50px; } .draw .big:nth-child(2) { width: 42px; } .draw .big:nth-child(3) { width: 57px; } .draw .big:nth-child(4) { width: 36px; }
.draw .big:nth-child(4) svg { margin-left: 2px; }
.col { display: flex; flex-direction: column; padding-top: 3.500px; }
.col div { height: 24.500px; display: flex; align-items: center; gap: 5px; }
.draw .col { padding-left: 6px; } .draw .col .caret { margin-left: 1px; }
.side { margin-top: 57px; }
.cons .big:nth-child(1) { width: 41px; } .cons .big:nth-child(2) { width: 82px; margin-left: 4px; } .cons .side { margin-left: -5px; } .cons .col { padding-left: 8px; } .cons .col div, .anno .col div { gap: 5px; }
.detail .big { width: 64px; margin-left: 4px; } .detail .side { margin-left: -6px; } .detail .col { padding-left: 7px; }
.anno .big { width: 62px; margin-left: 5px; } .anno .side { margin-left: -5px; } .anno .col { padding-left: 8px; }
.rows { flex-direction: column; padding-top: 3.500px; }
.row { height: 24.500px; display: grid; align-items: center; justify-items: center; }
.modify .row { grid-template-columns: 28px 9px 31px 19px 14px 26px; }
.layers .top { grid-template-columns: 28px 28px 28px 23px 29px 24px 28px 22px; }
.layers .low { grid-template-columns: 28px 7px 29px 6px; }
.select { height: 22px; margin: 1px 2px 1.500px 3px; border: 1px solid #262d37; background: #4b576a; display: flex; align-items: center; padding-left: 3px; gap: 3px; }
.swatch { width: 14px; height: 14px; background: #fff; margin: 0 2px 0 3px; }
.select .caret { margin-left: auto; margin-right: 1px; }
.select span { margin-bottom: 1px; font-size: 12px; }
.tiles { display: flex; gap: 1px; margin: 1px 0 1px 0; }
.tile { width: 60px; background: #4e5a6d; border: 1px solid #222933; display: flex; flex-direction: column; align-items: center; padding-top: 3px; line-height: 15px; }
.tile .caret { margin-top: auto; margin-bottom: 4px; }

.doctabs { height: 27px; display: grid; align-items: center; justify-items: center; padding-top: 3px; white-space: nowrap; grid-template-columns: 15px 24px 20px 28px 177px 4px 26px 16px; }
.doctabs u, .layouts u { width: 1px; height: 16px; background: #4b5463; transform: skewX(-24deg); }
.doctabs span:first-of-type { padding-bottom: 1px; }
.doctabs .active { width: 170px; height: 24px; background: #3b4453; clip-path: polygon(8px 0, 100% 0, 161px 100%, 0 100%); font-weight: bold; color: #fff; display: flex; align-items: center; padding: 0 0 1px 18px; gap: 9px; letter-spacing: -0.28px; }
.strip { height: 4px; flex: none; margin: 0 2px 0 3px; background: #3b4453; }
.canvas { height: 505px; background: #212830; }
.canvas text { letter-spacing: 0; }
.thin, .ring { stroke: #d6d8da; fill: none; }
.ring { stroke-width: 1.200; }
.ui { fill: #fff; font: 12px "Open Sans", sans-serif; }
.ttl text { font: 30px "Liberation Sans", sans-serif; fill: #fff; }
.ttl .num { font-size: 31px; }
.dims text { font: 13.600px "Liberation Sans", sans-serif; fill: #e4e4e4; }
.yel { fill: none; stroke: #ff0; stroke-width: 3.500; stroke-linejoin: round; }
.grn { stroke: #00e000; fill: none; }
.hatch { stroke: #12c294; fill: none; stroke-width: 1.200; }
.dimline { stroke: #d0d0d0; fill: none; }
.two { marker-start: url(#ar); marker-end: url(#ar); }
.cross { stroke: #fff; fill: none; }
.nsew text { font: bold 15px "Liberation Sans", sans-serif; fill: #a9abad; text-anchor: middle; }
.top { font: bold 10px "Open Sans", sans-serif; fill: #40464c; }
.wcs { font: 10.500px "Liberation Sans", sans-serif; fill: #5d6069; }
.navi { fill: none; stroke: #41464c; }
.act { font: 14px "Open Sans", sans-serif; fill: #83878b; }
.big1 { font-size: 19px; }

.status { height: 31px; display: flex; justify-content: space-between; }
.layouts { height: 24px; display: grid; align-items: center; justify-items: center; padding-left: 15px; grid-template-columns: 24px 75px 49px 24px 42px 24px 20px 22px; }
.model { width: 70px; height: 24px; line-height: 24px; text-align: center; font-weight: bold; background: #3b4453; clip-path: polygon(10px 0, 100% 0, 60px 100%, 0 100%); }
.layouts .model { justify-self: end; margin-right: 1px; padding-left: 1px; }
.layouts span:nth-of-type(2) { justify-self: end; }
.layouts span { font-size: 11.500px; letter-spacing: -0.15px; }
.tools { margin: 2px 4px 0 0; height: 24px; display: grid; grid-template-columns: 47px 3px 24px 4px 22px 2px 23px 27px 14px 24px 16px 2px 22px 2px 22px 17px 2px 22px 2px 23px 17px 3px 22px 18px 1px 24px 3px 24px 3px 24px 25px 22px 4px 29px 6px 24px; }
.btn { background: #3b4453; display: flex; align-items: center; justify-content: center; }
.btn.m { font-size: 12px; letter-spacing: -0.2px; padding-bottom: 2px; }
.hot { background: #6291c4; }

.taskbar { width: 1366px; height: 40px; background: linear-gradient(90deg, #cfe6ee, #d1e4ee 55%, #d6dbe9); color: #111; display: grid; align-items: center; justify-items: center; font-size: 13.500px; white-space: nowrap;
 grid-template-columns: 16px 16px 17px 287px 16px 18px 29px 24px 25px 24px 25px 24px 13px 48px 312px 24px 44px 85px 21px 14px 11px 14px 8px 18px 7px 16px 7px 18px 5px 18px 37px 75px 34px; }
.find { width: 287px; height: 40px; background: #fff; border: 1px solid #c4c4c4; display: flex; align-items: center; padding-left: 11px; }
.find span { flex: 1; padding-left: 9px; font-size: 14px; color: #333; letter-spacing: -0.03px; }
.app { width: 48px; height: 40px; background: #edf5f9; border-bottom: 2px solid #0078d7; display: flex; align-items: center; justify-content: center; }
.one { font: bold 9px "Liberation Sans", sans-serif; fill: #fff; }
.temp { padding-left: 1px; }
.sun { justify-self: end; padding-right: 2px; }
.eng, .clock { font-size: 12px; }
.eng { padding-left: 5px; }
.clock { line-height: 18px; text-align: center; letter-spacing: -0.4px; }
```
